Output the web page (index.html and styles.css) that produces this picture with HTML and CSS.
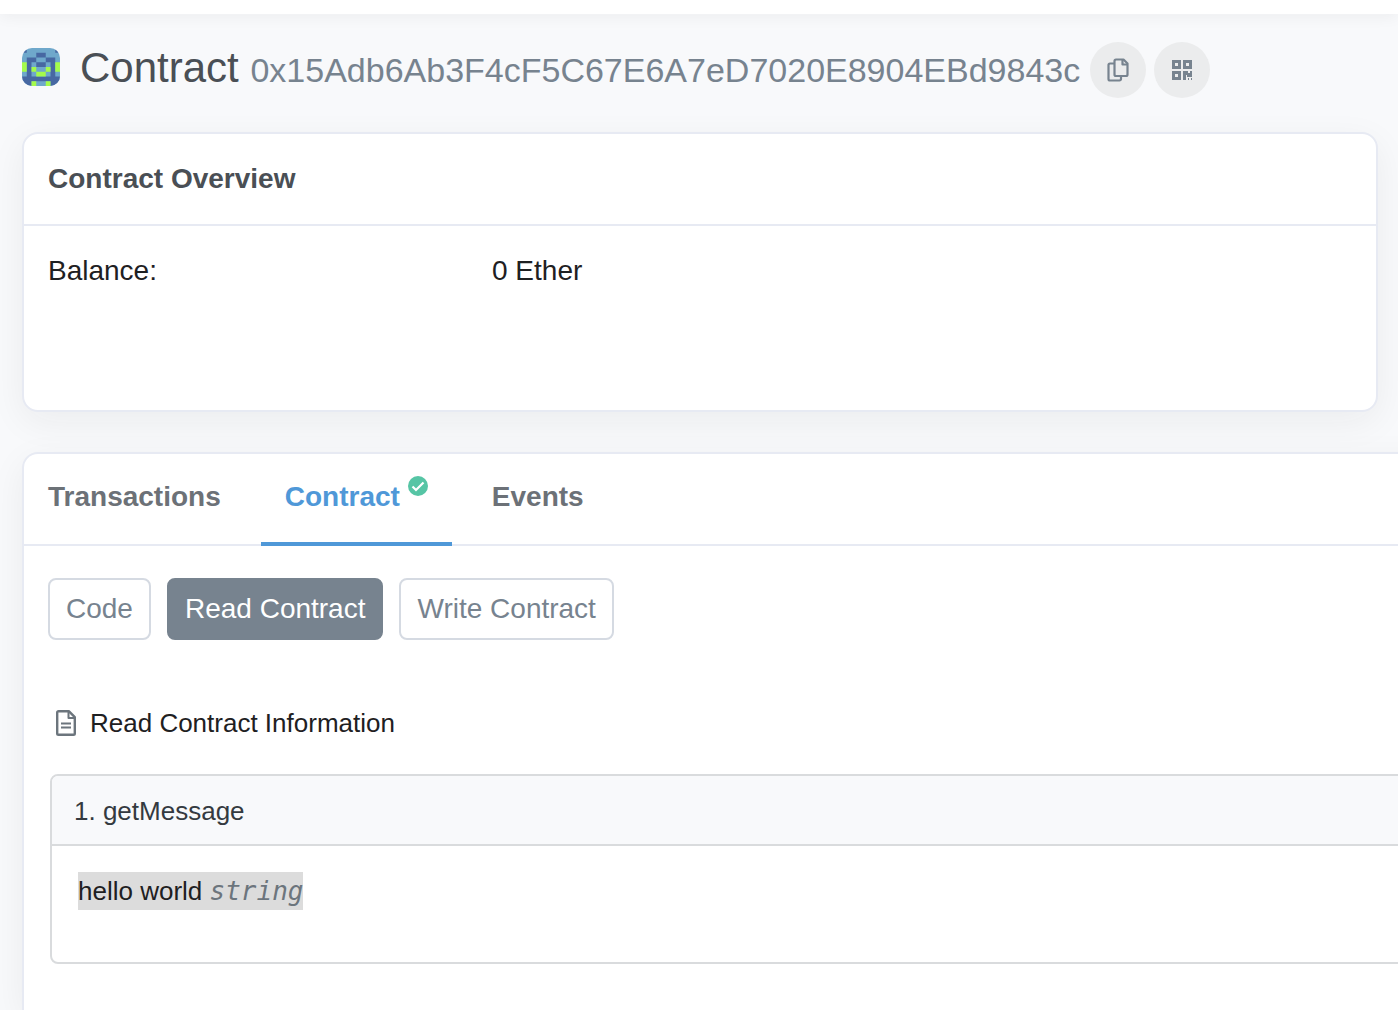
FILE: index.html
```html
<!DOCTYPE html>
<html lang="en">
<head>
    <meta charset="UTF-8">
    <meta name="viewport" content="width=device-width, initial-scale=1.0">
    <title>Contract Address</title>
    <link rel="stylesheet" href="styles.css">
</head>
<body>

<div class="topbar"></div>

<main class="page">

    <header class="title-row">
        <div class="title">
            <!-- address identicon, 8x8 blocks -->
            <svg class="identicon" viewBox="0 0 8 8" aria-hidden="true">
                <path fill="#6fa8cb" d="M0 0h8v8H0z"/>
                <path fill="#4768a2" d="M0 0h1v1H0zM7 0h1v1H7zM3 1h2v1H3zM1 2h2v1H2v3H1zM5 2h2v4H6V3H5zM3 3h2v1H3zM0 6h8v2H6V7H2v1H0z"/>
                <path fill="#a4fb4b" d="M0 3h1v2H0zM7 3h1v2H7zM2 4h1v1H2zM5 4h1v1H5zM3 5h2v1H3zM2 7h1v1H2zM5 7h1v1H5z"/>
            </svg>
            <h1>Contract <span class="address">0x15Adb6Ab3F4cF5C67E6A7eD7020E8904EBd9843c</span></h1>
        </div>
        <div class="title-actions">
            <button class="btn-icon" type="button" aria-label="Copy address">
                <svg width="22" height="24" viewBox="0 0 22 24" fill="none" stroke="currentColor" stroke-width="2.200" stroke-linejoin="round">
                    <path d="M7 5.500H3a1.500 1.500 0 0 0-1.500 1.500v14a1.500 1.500 0 0 0 1.500 1.500h9.500a1.500 1.500 0 0 0 1.500-1.500v-3"/>
                    <path d="M9 1.500h7.500l4 4v11a1.500 1.500 0 0 1-1.500 1.500H9a1.500 1.500 0 0 1-1.500-1.500V3A1.500 1.500 0 0 1 9 1.500z"/>
                    <path d="M15.500 2v4.500h5"/>
                </svg>
            </button>
            <button class="btn-icon" type="button" aria-label="View QR code">
                <svg width="22" height="22" viewBox="0 0 22 22" fill="currentColor" fill-rule="evenodd">
                    <path d="M1 1h9v9H1zM4 4v3h3V4zM12 1h9v9h-9zM15 4v3h3V4zM1 12h9v9H1zM4 15v3h3v-3z"/>
                    <path d="M12 12h5v2h2v-2h2v6h-5v-2h-1v5h-3zM17 19h1v2h-1zM20 19h1v2h-1z"/>
                </svg>
            </button>
        </div>
    </header>

    <section class="card overview">
        <h2 class="card-header">Contract Overview</h2>
        <dl class="card-row">
            <dt>Balance:</dt>
            <dd>0 Ether</dd>
        </dl>
    </section>

    <section class="card details">
        <nav class="tabs">
            <a class="tab" href="#transactions">Transactions</a>
            <a class="tab active" href="#code">Contract
                <svg class="verified" viewBox="0 0 20 20" aria-hidden="true">
                    <circle cx="10" cy="10" r="10" fill="#56c5a5"/>
                    <path d="M4.500 10.500l3.500 3.500L15.500 6.500" fill="none" stroke="#fff" stroke-width="2.200"/>
                </svg>
            </a>
            <a class="tab" href="#events">Events</a>
        </nav>

        <div class="pills">
            <button class="pill" type="button">Code</button>
            <button class="pill active" type="button">Read Contract</button>
            <button class="pill" type="button">Write Contract</button>
        </div>

        <p class="info">
            <svg width="20" height="26" viewBox="0 0 20 26" fill="none" stroke="currentColor" stroke-width="2.400" stroke-linejoin="round" aria-hidden="true">
                <path d="M2.500 1.200h10.300l6 6v16.300a1.300 1.300 0 0 1-1.300 1.300h-15a1.300 1.300 0 0 1-1.300-1.300V2.500a1.300 1.300 0 0 1 1.300-1.300z"/>
                <path d="M12.500 1.500v6.500h6M5 13.500h10M5 17.500h10" stroke-width="2"/>
            </svg>
            Read Contract Information
        </p>

        <div class="method">
            <h3 class="method-header">1. getMessage</h3>
            <div class="method-body">
                <span class="result">hello world <i>string</i></span>
            </div>
        </div>
    </section>

</main>

</body>
</html>
```

FILE: styles.css
```css
* {
    box-sizing: border-box;
}
body {
    margin: 0;
    min-height: 100vh;
    display: flex;
    flex-direction: column;
    overflow-x: hidden;
    font-family: "Liberation Sans", Helvetica, Arial, sans-serif;
    font-size: 28px;
    line-height: 42px;
    color: #1e2022;
    background-color: #f8f9fb;
}
h1, h2, h3, p, dl, dd {
    margin: 0;
}
button {
    font-family: inherit;
    font-size: inherit;
    cursor: pointer;
}

.topbar {
    height: 14px;
    background-color: white;
    box-shadow: 0 2px 16px rgba(30, 32, 34, 0.06);
}
.page {
    flex: 1;
    display: flex;
    flex-direction: column;
    padding: 28px 20px 0 22px;
}

/* Title */
.title-row {
    display: flex;
    align-items: flex-start;
    gap: 10px;
    margin-bottom: 34px;
}
.title {
    display: flex;
    align-items: flex-start;
    gap: 20px;
}
.identicon {
    width: 38px;
    height: 38px;
    margin-top: 6px;
    border-radius: 10px;
}
h1 {
    font-size: 42px;
    font-weight: 400;
    line-height: 52px;
    color: #4a4f55;
    white-space: nowrap;
}
.address {
    font-size: 34px;
    color: #77838f;
}
.title-actions {
    display: flex;
    gap: 8px;
}
.btn-icon {
    display: flex;
    align-items: center;
    justify-content: center;
    width: 56px;
    height: 56px;
    padding: 0;
    border: none;
    border-radius: 50%;
    color: #77838f;
    background-color: #ebeced;
}

/* Cards */
.card {
    background-color: white;
    border: 2px solid #e7eaf3;
    border-radius: 16px;
    box-shadow: 0 10px 36px rgba(30, 32, 34, 0.06);
}
.overview {
    min-height: 280px;
    margin-bottom: 40px;
}
.card-header {
    padding: 24px;
    border-bottom: 2px solid #e7eaf3;
    font-size: 28px;
    color: #4a4f55;
}
.card-row {
    display: grid;
    grid-template-columns: 1fr 2fr;
    column-gap: 14px;
    padding: 24px;
}
.details {
    flex: 1;
    margin-right: -60px;
    border-bottom: none;
    border-radius: 16px 0 0 0;
}

/* Tabs */
.tabs {
    display: flex;
    gap: 16px;
    border-bottom: 2px solid #e7eaf3;
}
.tab {
    display: flex;
    gap: 8px;
    margin-bottom: -2px;
    padding: 22px 24px 24px;
    border-bottom: 4px solid transparent;
    font-weight: 700;
    color: #6c7177;
    text-decoration: none;
}
.tab.active {
    color: #4f98d8;
    border-color: #4f98d8;
}
.verified {
    width: 20px;
    height: 20px;
}

/* Contract sub menu */
.pills {
    display: flex;
    gap: 16px;
    padding: 32px 24px;
}
.pill {
    height: 62px;
    padding: 0 16px;
    border: 2px solid #d5dae2;
    border-radius: 8px;
    color: #77838f;
    background-color: white;
}
.pill.active {
    color: white;
    border-color: #77838f;
    background-color: #77838f;
}

.info {
    display: flex;
    align-items: center;
    gap: 14px;
    padding: 30px 32px;
    font-size: 26px;
}
.info svg {
    color: #6c757d;
}

/* Read result */
.method {
    margin-left: 26px;
    border: 2px solid #d9dbdd;
    border-radius: 8px;
    font-size: 26px;
}
.method-header {
    padding: 14px 22px 12px;
    border-bottom: 2px solid #d9dbdd;
    border-radius: 6px 0 0 0;
    font-size: 26px;
    font-weight: 400;
    line-height: 42px;
    color: #343a40;
    background-color: #f8f9fb;
}
.method-body {
    min-height: 116px;
    padding: 24px 26px;
}
.result {
    display: inline-block;
    line-height: 38px;
    background-color: #dcdcdc;
}
.result i {
    font-family: "DejaVu Sans Mono", monospace;
    color: #6c757d;
}
```
